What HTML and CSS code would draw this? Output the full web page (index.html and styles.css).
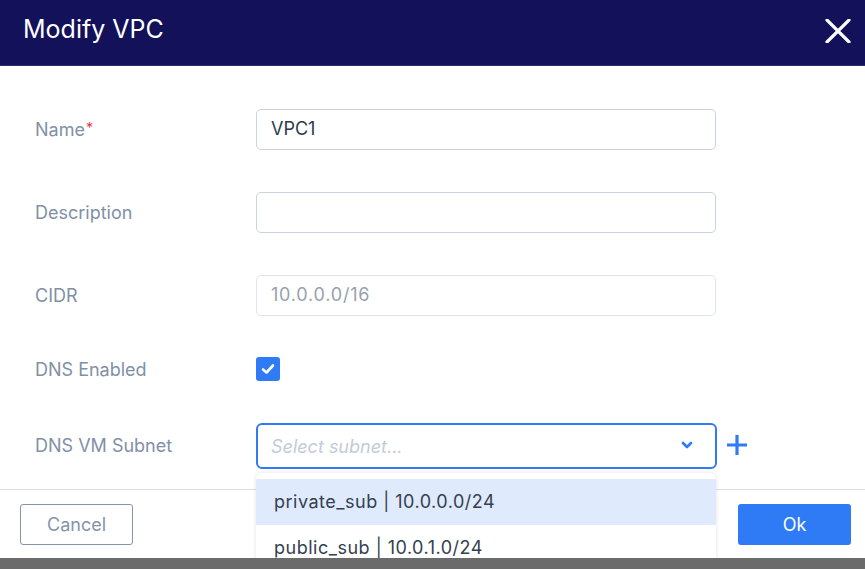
FILE: index.html
```html
<!DOCTYPE html>
<html lang="en">
<head>
    <meta charset="UTF-8">
    <meta name="viewport" content="width=device-width, initial-scale=1.0">
    <title>Modify VPC</title>
    <link rel="stylesheet" href="styles.css">
</head>
<body>
<div class="modal">
    <div class="modal-header">
        <h1>Modify VPC</h1>
        <button class="close-btn" aria-label="Close">
            <svg width="26" height="24" viewBox="0 0 26 24">
                <path d="M2 1 L24 23 M24 1 L2 23" stroke="#fff" stroke-width="3.2" stroke-linecap="round"/>
            </svg>
        </button>
    </div>

    <form class="modal-body">
        <div class="form-row">
            <label>Name<span class="required">*</span></label>
            <input type="text" class="text-input" value="VPC1">
        </div>
        <div class="form-row">
            <label>Description</label>
            <input type="text" class="text-input">
        </div>
        <div class="form-row row-short">
            <label>CIDR</label>
            <input type="text" class="text-input disabled" value="10.0.0.0/16" disabled>
        </div>
        <div class="form-row row-check">
            <label>DNS Enabled</label>
            <span class="checkbox">
                <svg width="14" height="12" viewBox="0 0 14 12">
                    <path d="M2 6.5 L5.5 9.5 L12 2.5" fill="none" stroke="#fff" stroke-width="2.6" stroke-linecap="round" stroke-linejoin="round"/>
                </svg>
            </span>
        </div>
        <div class="form-row row-select">
            <label>DNS VM Subnet</label>
            <div class="select-wrap">
                <div class="select">
                    <span class="placeholder">Select subnet...</span>
                    <svg class="chevron" width="12" height="8" viewBox="0 0 12 8">
                        <path d="M2 2 L6 6 L10 2" fill="none" stroke="#2f7bf5" stroke-width="2.6" stroke-linecap="round" stroke-linejoin="round"/>
                    </svg>
                </div>
                <ul class="menu">
                    <li class="active">private_sub | 10.0.0.0/24</li>
                    <li>public_sub | 10.0.1.0/24</li>
                </ul>
            </div>
            <svg class="add-icon" width="22" height="22" viewBox="0 0 22 22">
                <path d="M11 1 V21 M1 11 H21" stroke="#2f7bf5" stroke-width="3.2"/>
            </svg>
        </div>
    </form>

    <div class="modal-footer">
        <button class="btn btn-cancel">Cancel</button>
        <button class="btn btn-ok">Ok</button>
    </div>
</div>
</body>
</html>
```

FILE: styles.css
```css
body {
    font-family: Inter, "Noto Sans", sans-serif;
    background-color: #6b6b6b;
    margin: 0;
    padding: 0;
}
.modal {
    width: 865px;
    height: 558px;
    background: white;
}
.modal-header {
    height: 66px;
    background-color: #12115a;
    border-bottom: 1px solid #2d2c72;
    display: flex;
    align-items: center;
    justify-content: space-between;
    padding: 0 14px 0 23px;
    box-sizing: border-box;
}
.modal-header h1 {
    margin: 0 0 8px 0;
    font-size: 25px;
    font-weight: 400;
    color: white;
}
.close-btn {
    background: none;
    border: none;
    padding: 0;
    margin-bottom: 4px;
    cursor: pointer;
    display: flex;
}
.modal-body {
    padding: 43px 0 20px 35px;
    margin: 0;
}
.form-row {
    display: flex;
    align-items: center;
    height: 41px;
    margin-bottom: 42px;
}
.form-row.row-short {
    margin-bottom: 32px;
}
.form-row.row-check {
    margin-bottom: 34px;
}
.form-row.row-check label {
    margin-top: 1px;
}
.form-row.row-select {
    height: 46px;
    margin-bottom: 0;
}
label {
    width: 221px;
    flex-shrink: 0;
    font-size: 18px;
    color: #8190a6;
    margin-top: -1px;
}
.required {
    color: #e8344c;
    font-size: 14px;
    vertical-align: top;
    margin-left: 1px;
}
.text-input {
    width: 460px;
    height: 41px;
    box-sizing: border-box;
    border: 1px solid #c9d3e1;
    border-radius: 5px;
    padding: 0 14px 2px 14px;
    font-family: inherit;
    font-size: 18px;
    color: #2c3a4b;
    background: white;
}
.text-input.disabled {
    border-color: #dfe5ec;
    color: #98a1ac;
    letter-spacing: 0.8px;
}
.checkbox {
    width: 24px;
    height: 24px;
    background-color: #2f7bf5;
    border-radius: 3px;
    display: flex;
    align-items: center;
    justify-content: center;
}
.select-wrap {
    position: relative;
    width: 461px;
}
.select {
    height: 46px;
    box-sizing: border-box;
    border: 2px solid #2f7bf5;
    border-radius: 6px;
    display: flex;
    align-items: center;
    justify-content: space-between;
    padding: 0 22px 0 13px;
}
.placeholder {
    font-size: 18px;
    font-style: italic;
    color: #c3cbd8;
}
.chevron {
    margin-top: -2px;
}
.add-icon {
    margin-left: 9px;
    margin-top: -2px;
}
.menu {
    position: absolute;
    top: 50px;
    left: 0;
    width: 460px;
    list-style: none;
    margin: 0;
    padding: 6px 0 0 0;
    background: white;
    border-radius: 6px 6px 0 0;
    box-shadow: 0 0 4px rgba(0, 0, 0, 0.12);
    height: 100px;
    box-sizing: border-box;
}
.menu li {
    height: 44px;
    display: flex;
    align-items: center;
    padding: 0 18px 2px 18px;
    font-size: 18px;
    letter-spacing: 0.5px;
    color: #34404f;
}
.menu li.active {
    background-color: #dfeafc;
}
.modal-footer {
    border-top: 1px solid #d5dde8;
    display: flex;
    justify-content: space-between;
    padding: 14px 14px 0 20px;
}
.btn {
    width: 113px;
    height: 41px;
    border-radius: 3px;
    font-family: inherit;
    font-size: 18px;
    cursor: pointer;
}
.btn-cancel {
    background: white;
    border: 1px solid #8594aa;
    color: #8594aa;
}
.btn-ok {
    background-color: #2f7bf5;
    border: none;
    color: white;
}
```
